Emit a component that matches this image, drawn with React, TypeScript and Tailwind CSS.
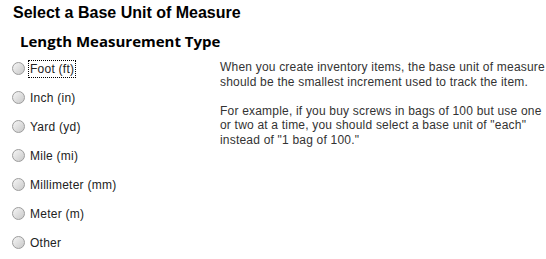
const units = [
  'Foot (ft)',
  'Inch (in)',
  'Yard (yd)',
  'Mile (mi)',
  'Millimeter (mm)',
  'Meter (m)',
  'Other',
]

function Radio() {
  return (
    <span className="w-[13px] h-[13px] rounded-full border border-[#9c9c9c] bg-gradient-to-br from-[#f6f6f6] to-[#c9c9c9] shrink-0" />
  )
}

export default function App() {
  return (
    <div className="w-[546px] h-[259px] bg-white overflow-hidden font-['Liberation_Sans',Arial,sans-serif] text-[#222]">
      <h1 className="pl-[13px] pt-[4px] text-[16px] leading-[18px] font-bold text-black">
        Select a Base Unit of Measure
      </h1>
      <h2 className="pl-[20px] mt-[9px] text-[15px] leading-[20px] font-bold text-black font-['Open_Sans',sans-serif]">
        Length Measurement Type
      </h2>
      <div className="flex mt-[3px]">
        <ul className="w-[219px] pl-[12px]">
          {units.map((u, i) => (
            <li key={u} className="h-[29px] flex items-center gap-[4px]">
              <Radio />
              <span
                className={
                  'text-[12px] leading-[16px] px-[1px] tracking-[0.25px] ' +
                  (i === 0 ? 'outline outline-1 outline-dotted outline-black' : '')
                }
              >
                {u}
              </span>
            </li>
          ))}
        </ul>
        <div className="flex-1 pt-[6px] pl-[1px] text-[12px] leading-[14.5px] text-[#333] tracking-[0.2px] whitespace-nowrap">
          <p>
            When you create inventory items, the base unit of measure
            <br />
            should be the smallest increment used to track the item.
          </p>
          <p className="mt-[14.5px]">
            For example, if you buy screws in bags of 100 but use one
            <br />
            or two at a time, you should select a base unit of "each"
            <br />
            instead of "1 bag of 100."
          </p>
        </div>
      </div>
    </div>
  )
}
